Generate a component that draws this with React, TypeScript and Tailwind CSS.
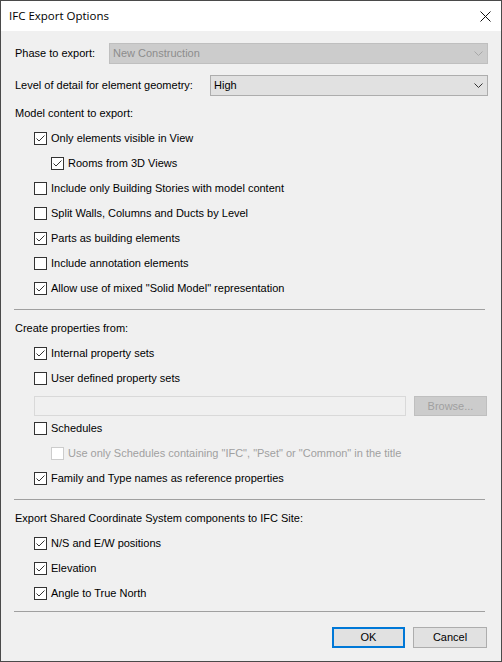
import React from 'react';

const font = { fontFamily: '"Liberation Sans", Arial, sans-serif' };

function CheckBox({ checked = false, disabled = false }: { checked?: boolean; disabled?: boolean }) {
  return (
    <span
      className={`flex h-[13px] w-[13px] shrink-0 items-center justify-center border bg-white ${
        disabled ? 'border-[#cccccc]' : 'border-[#333333]'
      }`}
    >
      {checked ? (
        <svg width="11" height="11" viewBox="0 0 11 11" fill="none">
          <path d="M1.5 5.5 L4 8 L9.5 2.5" stroke="#333333" strokeWidth="1" />
        </svg>
      ) : null}
    </span>
  );
}

function CheckRow({
  label,
  checked = false,
  disabled = false,
  indent = 'pl-[19px]',
}: {
  label: string;
  checked?: boolean;
  disabled?: boolean;
  indent?: string;
}) {
  return (
    <div className={`flex h-[25px] items-center gap-[4px] ${indent}`}>
      <CheckBox checked={checked} disabled={disabled} />
      <span className={disabled ? 'text-[#a0a0a0]' : 'text-black'}>{label}</span>
    </div>
  );
}

function Chevron({ color }: { color: string }) {
  return (
    <svg width="9" height="5" viewBox="0 0 9 5" fill="none">
      <path d="M0.5 0.5 L4.5 4.5 L8.5 0.5" stroke={color} strokeWidth="1" />
    </svg>
  );
}

function Heading({ children, className = '' }: { children: React.ReactNode; className?: string }) {
  return <div className={`flex h-[25px] items-center text-black ${className}`}>{children}</div>;
}

function Separator({ className = '' }: { className?: string }) {
  return <div className={`-ml-[1px] mr-[3px] h-px bg-[#a0a0a0] ${className}`} />;
}

export default function App() {
  return (
    <div
      className="flex h-[662px] w-[502px] flex-col border border-[#4a4a4a] bg-[#f0f0f0] text-[11px] leading-none"
      style={font}
    >
      {/* title bar */}
      <div className="flex h-[30px] shrink-0 items-center justify-between bg-white pl-[8px] pr-[10px]">
        <span className="text-[11.5px] text-black" style={{ fontFamily: '"Open Sans", "Noto Sans", sans-serif' }}>
          IFC Export Options
        </span>
        <svg width="11" height="11" viewBox="0 0 11 11" fill="none">
          <path d="M0.5 0.5 L10.5 10.5 M10.5 0.5 L0.5 10.5" stroke="#111111" strokeWidth="1" />
        </svg>
      </div>

      {/* body */}
      <div className="flex flex-1 flex-col pl-[14px] pr-[13px] pt-[12px]">
        <div className="flex h-[21px] items-center">
          <span className="w-[94px] shrink-0 text-black">Phase to export:</span>
          <div className="flex h-full flex-1 items-center justify-between border border-[#bfbfbf] bg-[#cccccc] pl-[3px] pr-[4px]">
            <span className="text-[#8d8d8d]">New Construction</span>
            <Chevron color="#a8a8a8" />
          </div>
        </div>

        <div className="mt-[11px] flex h-[21px] items-center">
          <span className="w-[195px] shrink-0 text-black">Level of detail for element geometry:</span>
          <div className="flex h-full flex-1 items-center justify-between border border-[#adadad] bg-[#e1e1e1] pl-[3px] pr-[4px]">
            <span className="text-black">High</span>
            <Chevron color="#333333" />
          </div>
        </div>

        <Heading className="mt-[5px]">Model content to export:</Heading>
        <CheckRow label="Only elements visible in View" checked />
        <CheckRow label="Rooms from 3D Views" checked indent="pl-[36px]" />
        <CheckRow label="Include only Building Stories with model content" />
        <CheckRow label="Split Walls, Columns and Ducts by Level" />
        <CheckRow label="Parts as building elements" checked />
        <CheckRow label="Include annotation elements" />
        <CheckRow label={'Allow use of mixed "Solid Model" representation'} checked />

        <Separator className="mt-[8px]" />

        <Heading className="mt-[6px]">Create properties from:</Heading>
        <CheckRow label="Internal property sets" checked />
        <CheckRow label="User defined property sets" />
        <div className="mt-[5px] mr-[1px] flex h-[20px] gap-[8px] pl-[19px]">
          <div className="flex-1 border border-[#d9d9d9] bg-[#f0f0f0]" />
          <div className="flex w-[73px] items-center justify-center border border-[#bfbfbf] bg-[#cccccc] text-[#a0a0a0]">
            Browse...
          </div>
        </div>
        <CheckRow label="Schedules" />
        <CheckRow
          label={'Use only Schedules containing "IFC", "Pset" or "Common" in the title'}
          disabled
          indent="pl-[36px]"
        />
        <CheckRow label="Family and Type names as reference properties" checked />

        <Separator className="mt-[8px]" />

        <Heading className="mt-[6px]">Export Shared Coordinate System components to IFC Site:</Heading>
        <CheckRow label="N/S and E/W positions" checked />
        <CheckRow label="Elevation" checked />
        <CheckRow label="Angle to True North" checked />

        <Separator className="mt-[5px] mr-[1px]" />

        <div className="mt-[15px] flex justify-end gap-[8px] pr-[1px]">
          <button
            type="button"
            className="flex h-[21px] w-[73px] items-center justify-center border-2 border-[#0078d7] bg-[#e1e1e1] text-black"
          >
            OK
          </button>
          <button
            type="button"
            className="flex h-[21px] w-[74px] items-center justify-center border border-[#adadad] bg-[#e1e1e1] text-black"
          >
            Cancel
          </button>
        </div>
      </div>
    </div>
  );
}
